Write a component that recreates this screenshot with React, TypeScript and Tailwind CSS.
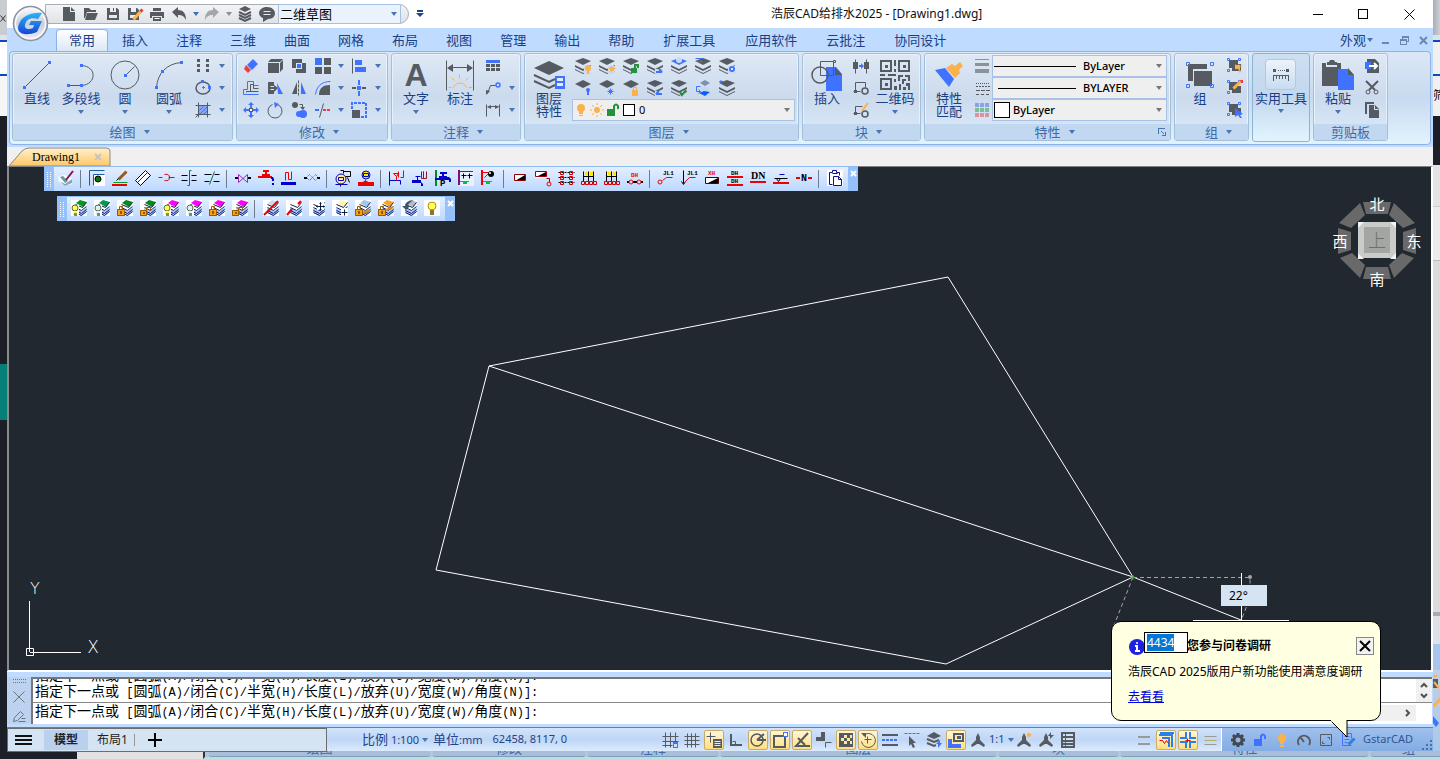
import { useEffect, useRef, type ReactNode } from "react";

const G = "#565b62";
const B = "#3f72ff";
const O = "#fbb24c";

type SvgProps = { w?: number; h?: number; box?: string; crisp?: boolean; children: ReactNode };

function Svg({ w = 16, h = 16, box, crisp, children }: SvgProps) {
  return (
    <svg
      width={w}
      height={h}
      viewBox={box ?? `0 0 ${w} ${h}`}
      fill="none"
      className="shrink-0 overflow-visible"
      shapeRendering={crisp ? "crispEdges" : undefined}
      aria-hidden="true"
    >
      {children}
    </svg>
  );
}

// stroke path, odd widths are moved onto the pixel grid
function S({ d, c = G, w = 1, dash }: { d: string; c?: string; w?: number; dash?: string }) {
  return <path d={d} stroke={c} strokeWidth={w} strokeDasharray={dash} transform={w % 2 ? "translate(.5 .5)" : undefined} />;
}

// filled path
function F({ d, c = G }: { d: string; c?: string }) {
  return <path d={d} fill={c} />;
}

function Caret({ c = "#4a74b4" }: { c?: string }) {
  return (
    <Svg w={6} h={4}>
      <F d="M0 0h6L3 4z" c={c} />
    </Svg>
  );
}

/* ---------- quick access ---------- */

const quickIcons: { name: string; icon: ReactNode; caret?: string }[] = [
  { name: "新建", icon: <Svg><F d="M2 1h7v5h5v9H2z" /><F d="M10 1l4 4h-4z" /></Svg> },
  { name: "打开", icon: <Svg><F d="M1 2h5l2 2h5v2H4L2 12H1z" /><F d="M4 7h11l-3 7H2z" /></Svg> },
  { name: "保存", icon: <Svg><path fillRule="evenodd" fill={G} d="M2 2h10l2 2v10H2zM4 9v3h8V9zM5 2v4h6V2h-2v3H8V2z" /></Svg> },
  { name: "另存为", icon: <Svg><path fillRule="evenodd" fill={G} d="M1 2h9l2 2v10H1zM3 9v3h7V9zM4 2v4h5V2z" /><S d="M6 13l8-9" c={O} w={3} /><S d="M13 5l2-2" c="#e23b3b" w={3} /></Svg> },
  { name: "打印", icon: <Svg><F d="M4 2h8v3H4zM1 6h14v6h-2v-2H3v2H1zM4 11h8v4H4z" /><S d="M5 12h5" c="#fff" /></Svg> },
  { name: "放弃", icon: <Svg><F d="M1 6l6-5v3c5 0 8 3 8 10-2-4-4-5-8-5v3z" /></Svg>, caret: "#3c6db8" },
  { name: "重做", icon: <Svg><F d="M15 6L9 1v3c-5 0-8 3-8 10 2-4 4-5 8-5v3z" c="#a3a7ac" /></Svg>, caret: "#8a8f96" },
  { name: "图层", icon: <Svg><F d="M8 0l6 3-6 3-6-3z" /><S d="M2 6l6 3 6-3M2 9l6 3 6-3M2 12l6 3 6-3" w={2} /></Svg> },
  { name: "消息", icon: <Svg><F d="M8 1c10 0 11 12 1 12l-5 3 0-4C-3 9 0 1 8 1z" /><S d="M4 5h7M4 8h7" c="#e8eaee" /></Svg> },
];

function QuickAccess() {
  return (
    <div className="ml-[38px] mt-1 flex h-5 items-center rounded-r-full border border-[#a9afb8] bg-gradient-to-b from-[#f3f4f6] to-[#dfe2e7] pl-3 pr-[7px]">
      {quickIcons.map((q) => (
        <div key={q.name} className="flex items-center">
          <button type="button" aria-label={q.name} className="flex w-[22px] justify-center">
            {q.icon}
          </button>
          {q.caret && (
            <span className="flex w-[11px] justify-center">
              <Caret c={q.caret} />
            </span>
          )}
        </div>
      ))}
      <div className="relative flex items-center">
        <select
          aria-label="工作空间"
          className="h-5 w-[123px] appearance-none border border-[#a8c2e6] bg-[#eaf2fc] pl-px text-[13px] leading-4 text-black"
        >
          <option>二维草图</option>
        </select>
        <span className="pointer-events-none absolute right-1">
          <Caret />
        </span>
      </div>
    </div>
  );
}

function TitleBar() {
  return (
    <header className="relative flex h-7 shrink-0 bg-white">
      <button type="button" aria-label="浩辰CAD" className="absolute left-[5px] top-[5px] z-10">
        <Svg w={37} h={37}>
          <defs>
            <linearGradient id="orb" x1="0" y1="0" x2="0" y2="1">
              <stop offset="0" stopColor="#fdfdfe" />
              <stop offset="0.5" stopColor="#c9ced9" />
              <stop offset="1" stopColor="#eceff5" />
            </linearGradient>
            <linearGradient id="gee" x1="0" y1="0" x2="0" y2="1">
              <stop offset="0" stopColor="#2bb5f5" />
              <stop offset="1" stopColor="#1546d8" />
            </linearGradient>
          </defs>
          <circle cx="18.500" cy="18.500" r="17" fill="url(#orb)" stroke="#8a919f" strokeWidth="1.500" />
          <circle cx="18.500" cy="18.500" r="15" stroke="#f5f7fb" strokeWidth="1.500" />
          <path d="M30 8l-4 6c-7-2-12 0-13 6-1 4 4 5 8 3l1-3h-5l2-4h11l-5 11C12 32 3 28 7 19 10 11 19 7 30 8z" fill="url(#gee)" />
        </Svg>
      </button>
      <QuickAccess />
      <button type="button" aria-label="自定义" className="ml-[7px] flex h-7 items-center">
        <Svg w={8} h={8}>
          <F d="M1 0h6v2H1zM0 3h8L4 7z" c="#1e4489" />
        </Svg>
      </button>
      <h1 className="absolute left-[764px] top-0 text-[12px] leading-7 text-[#111]">浩辰CAD给排水2025 - [Drawing1.dwg]</h1>
      <div className="ml-auto flex">
        <button type="button" aria-label="最小化" className="flex w-[45px] items-center justify-center">
          <Svg w={11} h={11} crisp><S d="M0 5h10" c="#000" /></Svg>
        </button>
        <button type="button" aria-label="最大化" className="flex w-[46px] items-center justify-center">
          <Svg w={11} h={11} crisp><S d="M0 0h9v9H0z" c="#000" /></Svg>
        </button>
        <button type="button" aria-label="关闭" className="flex w-[47px] items-center justify-center">
          <Svg w={11} h={11}><S d="M0 0l10 10M10 0L0 10" c="#000" /></Svg>
        </button>
      </div>
    </header>
  );
}

const tabs = ["常用", "插入", "注释", "三维", "曲面", "网格", "布局", "视图", "管理", "输出", "帮助", "扩展工具", "应用软件", "云批注", "协同设计"];

function tabClass(label: string, active: boolean) {
  if (active) {
    return "h-[22px] whitespace-nowrap rounded-t border border-b-0 border-[#8db2e3] bg-gradient-to-b from-white to-[#dbe8f7] px-3 leading-[21px]";
  }
  if (label.length > 3) {
    return "h-[22px] whitespace-nowrap px-[15px] leading-[22px]";
  }
  return "h-[22px] whitespace-nowrap px-[14px] leading-[22px]";
}

function TabRow() {
  return (
    <nav className="flex h-[23px] shrink-0 items-end bg-[#bfdbff] pl-[49px] text-[13px] text-[#1a3f85]">
      {tabs.map((t, i) => (
        <button key={t} type="button" className={tabClass(t, i === 0)}>
          {t}
        </button>
      ))}
      <div className="ml-auto flex h-[22px] items-center pr-px">
        <button type="button" className="mr-2 flex items-center gap-px leading-5">
          外观
          <Caret />
        </button>
        <button type="button" aria-label="最小化文档" className="w-[19px]">
          <Svg w={9} h={9}><S d="M1 7h7" c="#6d86ad" w={2} /></Svg>
        </button>
        <button type="button" aria-label="还原文档" className="w-[19px]">
          <Svg w={9} h={9} crisp><S d="M2 2V0h6v5H6M2 1h6M0 3h6v5H0zM0 4h6" c="#6d86ad" /></Svg>
        </button>
        <button type="button" aria-label="关闭文档" className="w-[13px]">
          <Svg w={9} h={9}><S d="M1 1l7 7M8 1L1 8" c="#6d86ad" w={2} /></Svg>
        </button>
      </div>
    </nav>
  );
}

/* ---------- ribbon ---------- */

function Panel({ title, width, caret = true, launcher, children }: { title: string; width: string; caret?: boolean; launcher?: boolean; children: ReactNode }) {
  return (
    <section className={`${width} flex h-[88px] shrink-0 flex-col overflow-hidden rounded-[3px] border border-[#a3bfdc] bg-gradient-to-b from-[#dfe9f5] via-[#cbdaed] to-[#dcecf9] shadow-[inset_0_0_0_1px_#e8f1fa]`}>
      <div className="flex flex-1 pl-[2px] pt-px">{children}</div>
      <div className="relative flex h-4 shrink-0 items-center justify-center gap-2 bg-[#c1d8f0] text-[13px] leading-4 text-[#3f69a8]">
        {caret && <span className="w-[6px]" />}
        {title}
        {caret && <Caret />}
        {launcher && (
          <button type="button" aria-label="特性选项板" className="absolute right-1">
            <Svg w={8} h={8} crisp><S d="M0 5V0h6M3 3l3 3M7 3v4H3" c="#4a74b4" /></Svg>
          </button>
        )}
      </div>
    </section>
  );
}

function Big({ label, icon, caret, width = "w-11" }: { label: string; icon: ReactNode; caret?: boolean; width?: string }) {
  return (
    <button type="button" className={`${width} flex shrink-0 flex-col items-center text-[13px] text-[#1a3f85]`}>
      <span className="flex h-9 items-center justify-center pt-1">{icon}</span>
      <span className="whitespace-pre leading-[13px] pt-px">{label}</span>
      {caret && (
        <span className="pt-[5px]">
          <Caret />
        </span>
      )}
    </button>
  );
}

function Cell({ icon, name, width = "w-6" }: { icon?: ReactNode; name: string; width?: string }) {
  return (
    <button type="button" aria-label={name} className={`${width} flex h-[22px] shrink-0 items-center justify-center`}>
      {icon ?? <Caret />}
    </button>
  );
}

function Layers({ top = G, children }: { top?: string; children?: ReactNode }) {
  return (
    <Svg>
      <F d="M0 7l8 4 8-4v2l-8 4-8-4zM0 11l8 4 8-4v1l-8 4-8-4z" />
      <F d="M8 0l8 3-8 4-8-4z" c={top} />
      {children}
    </Svg>
  );
}

// pale patch under an accent in the lower right corner
const patch = <F d="M9 8h7v8H9z" c="#cfdcef" />;

const drawSmall: ReactNode[] = [
  <Svg crisp><F d="M2 1h3v3H2zM11 1h3v3h-3zM2 6h3v3H2zM11 6h3v3h-3zM2 11h3v3H2zM11 11h3v3h-3z" /></Svg>,
  <Svg><ellipse cx="8" cy="8" rx="7" ry="6" stroke={G} strokeWidth="1.500" /><F d="M6 0h3v3H6zM13 6h3v3h-3zM7 7h3v1H7zM8 6h1v3H8z" c={B} /></Svg>,
  <Svg><F d="M4 4h9v9H4z" c="#86a6f5" /><S d="M4 8l4-4M4 12l8-8M8 12l4-4" c={B} /><S d="M3 0v15M12 0v15M0 3h15M0 12h15M0 15l4-4" w={1} /></Svg>,
];

const modifyRows: ReactNode[][] = [
  [
    <Svg><F d="M10 1l5 5-6 6-5-5z" c={B} /><F d="M3 7l5 5-3 3-4-4z" c="#e8413f" /></Svg>,
    <Svg><F d="M4 1h12l-3 3H1zM1 5h11v10H1zM13 5l3-3v9l-3 3z" /></Svg>,
    <Svg><F d="M1 1h10v4H5v5H1z" /><F d="M5 5h10v10H5z" /><F d="M5 5h6v6H5z" c="#dbe6f5" /><F d="M6 6h4v4H6z" c={B} /></Svg>,
    <Svg><F d="M0 0h7v7H0z" c={B} /><F d="M9 0h7v7H9zM0 9h7v7H0zM9 9h7v7H9z" /></Svg>,
    null,
    <Svg><S d="M1 0v15" /><F d="M4 2h7v5H4zM4 9h11v5H4z" c={B} /></Svg>,
    null,
  ],
  [
    <Svg><S d="M15 14H0V9h4V1h6v4h5" c={B} /><S d="M15 11H3V12M3 11h4V4h3v4h5" /></Svg>,
    <Svg><F d="M1 2h6v12H1z" /><S d="M3 6h5M3 9h5" c="#dbe6f5" /><F d="M7 5l4 3-4 4z" /><F d="M10 3l6 11h-5z" c={B} /></Svg>,
    <Svg><F d="M6 2v12H1z" /><F d="M10 2v12h5z" c={B} /><S d="M7 0v16" dash="3 1" /></Svg>,
    <Svg><S d="M0 14C1 6 6 1 15 1" c={B} /><F d="M4 15C4 8 8 5 15 5v10z" /></Svg>,
    null,
    <Svg><S d="M1 8h4M11 8h4" w={2} /><S d="M8 0v5M8 11v5" c={B} w={2} /><F d="M6 6h4v4H6z" c={B} /></Svg>,
    null,
  ],
  [
    <Svg><S d="M8 2v12M2 8h12" c={B} w={2} /><F d="M8 0l3 3H5zM8 16l-3-3h6zM0 8l3-3v6zM16 8l-3 3V5z" c={B} /><F d="M6 6h4v4H6z" c={G} /><F d="M7 7h2v2H7z" c="#fff" /></Svg>,
    <Svg><S d="M5 2a7 7 0 1 0 5 0" /><F d="M7 0l5 2-4 4z" c={B} /></Svg>,
    <Svg><circle cx="4" cy="3" r="3" fill={G} /><S d="M8 2h3v4" /><F d="M9 5h5l-2 3z" /><circle cx="8" cy="12" r="3" fill={B} /><circle cx="12" cy="12" r="4" fill={B} /></Svg>,
    <Svg><S d="M0 8h4" c={B} w={2} /><S d="M4 15L8 1" /><S d="M8 8h8" c="#e8413f" w={2} dash="3 1" /></Svg>,
    null,
    <Svg><S d="M1 7V1h14v14H9" c={B} w={2} dash="3 1" /><F d="M1 8h8v8H1z" /></Svg>,
    null,
  ],
];

const layerRows: ReactNode[][] = [
  [
    <Layers>{patch}<circle cx="13" cy="10" r="3" fill={O} /><F d="M12 12h2v4h-2z" c={O} /></Layers>,
    <Layers>{patch}<circle cx="13" cy="11" r="2" fill={O} /><S d="M12 7v7M9 10h7M10 8l5 5M15 8l-5 5" c={O} /></Layers>,
    <Layers>{patch}<F d="M8 10h6v5H8z" c="#26913b" /><S d="M12 10V7h3v3" c="#26913b" w={2} /></Layers>,
    <Layers><F d="M8 11h8v5H8z" c="#cfdcef" /><S d="M9 14h6M12 11l3 3" c={B} w={2} /></Layers>,
    <Layers top={B}><circle cx="8" cy="2" r="3" fill="#c9dcf5" /></Layers>,
    <Layers><S d="M0 0h7M2 3h5" c={B} /></Layers>,
    <Layers>{patch}<circle cx="13" cy="11" r="3" fill={B} /><F d="M12 10h2v2h-2z" c="#dbe6f5" /></Layers>,
  ],
  [
    <Svg><F d="M8 0l8 4-8 4-8-4z" /><circle cx="13" cy="10" r="2" fill={B} /><F d="M12 11h2v4h-2z" c={B} /></Svg>,
    <Svg><F d="M8 0l8 4-8 4-8-4z" /><S d="M11 8v6M8 11h6M9 9l4 4M13 9l-4 4" c={B} /></Svg>,
    <Svg><F d="M8 0l8 4-8 4-8-4z" /><F d="M9 10h6v6H9z" c={O} /><S d="M10 10V7h3v3" c={O} /></Svg>,
    <Layers><F d="M8 11h8v5H8z" c="#cfdcef" /><S d="M15 14H9M12 11l-3 3" c={B} w={2} /></Layers>,
    <Layers><S d="M9 12l2 3 4-5" c="#26913b" w={2} /></Layers>,
    <Svg><F d="M10 0l5 3-5 3-5-3z" c="#7f8fae" /><F d="M10 6l5 3-5 3-5-3z" c="#c3d5f0" /><F d="M9 11l6 1-5 4-6-3z" c="#0b5cff" /><S d="M5 6H1v5h4M3 9l2 2-2 2" c={B} /></Svg>,
    <Layers><S d="M0 1h5M2 0L0 1l2 2" c={B} /></Layers>,
  ],
];

function Bulb({ c = O }: { c?: string }) {
  return (
    <Svg w={14} h={14}>
      <circle cx="7" cy="5" r="4" fill={c} />
      <F d="M5 8h4v3H5zM5 12h4v1H5z" c={c} />
    </Svg>
  );
}

function Sun() {
  return (
    <Svg w={14} h={14}>
      <circle cx="7" cy="7" r="3" fill={O} />
      <path d="M7 0v2M7 12v2M0 7h2M12 7h2M2 2l2 2M10 10l2 2M12 2l-2 2M4 10l-2 2" stroke={O} />
    </Svg>
  );
}

function LayerCombo() {
  return (
    <div className="relative ml-px flex h-[22px] w-[223px] items-center border border-[#a8c2e6] bg-[#efefef]">
      <span className="pointer-events-none absolute left-px flex items-center gap-[2px]">
        <Bulb />
        <Sun />
        <Svg w={14} h={14}><F d="M1 6h8v7H1z" c="#26913b" /><S d="M8 6V3q2-3 4 0v3" c="#26913b" w={2} /></Svg>
        <span className="ml-px h-3 w-3 border border-black bg-white" />
      </span>
      <select aria-label="当前图层" className="h-full w-full appearance-none bg-transparent pl-[66px] text-[11px] leading-4 text-black">
        <option>0</option>
      </select>
      <span className="pointer-events-none absolute right-1"><Caret c="#777" /></span>
    </div>
  );
}

function PropCombo({ label, text, left, line }: { label: string; text: string; left: string; line: ReactNode }) {
  return (
    <div className="relative flex h-[22px] w-[175px] items-center border border-[#a8c2e6] bg-[#efefef]">
      <span className="pointer-events-none absolute left-px flex items-center">{line}</span>
      <select aria-label={label} className={`${left} h-full w-full appearance-none bg-transparent text-[11px] font-medium leading-4 text-black`}>
        <option>{text}</option>
      </select>
      <span className="pointer-events-none absolute right-1"><Caret c="#777" /></span>
    </div>
  );
}

const groupBox = (
  <>
    <F d="M2 2h9v4H6v4H2z" />
    <F d="M5 6h9v7H5z" />
    <S d="M0 0h2v2H0zM11 0h2v2h-2zM0 11h2v2H0z" c={B} />
  </>
);

function Ribbon() {
  return (
    <div className="shrink-0 bg-[#bfdbff] px-[2px] pb-[2px]">
      <div className="flex h-[94px] gap-[3px] overflow-hidden rounded-[4px] border border-[#8db2e3] bg-gradient-to-b from-[#dbe7f5] via-[#c8daf0] to-[#e1f4fe] pl-[2px] pt-px">
        <Panel title="绘图" width="w-[221px]">
          <Big label="直线" icon={<Svg w={28} h={28}><S d="M1 26L26 1" /><F d="M0 25h3v3H0zM25 0h3v3h-3z" c={B} /></Svg>} />
          <Big label="多段线" caret icon={<Svg w={28} h={28}><S d="M2 24h12c15-1 16-19 0-20" /><F d="M0 23h3v3H0zM13 23h3v3h-3zM13 3h3v3h-3z" c={B} /></Svg>} />
          <Big label="圆" caret icon={<Svg w={30} h={30}><circle cx="15" cy="15" r="14" stroke={G} /><S d="M15 15l9-9" /><F d="M14 14h3v3h-3z" c={B} /></Svg>} />
          <Big label="圆弧" caret icon={<Svg w={28} h={28}><S d="M1 26C2 12 11 2 26 1" /><F d="M0 25h3v3H0zM6 9h3v3H6zM25 0h3v3h-3z" c={B} /></Svg>} />
          <div className="grid grid-cols-[24px_14px] content-start">
            {drawSmall.map((icon, i) => [
              <Cell key={`i${i}`} icon={icon} name={`绘图工具 ${i + 1}`} />,
              <Cell key={`c${i}`} name={`绘图菜单 ${i + 1}`} width="w-[14px]" />,
            ])}
          </div>
        </Panel>

        <Panel title="修改" width="w-[152px]">
          <div className="grid grid-cols-[24px_24px_24px_23px_14px_22px_16px] content-start">
            {modifyRows.flatMap((row, r) =>
              row.map((icon, i) => <Cell key={`${r}-${i}`} icon={icon} name={`修改 ${r + 1}-${i + 1}`} width="w-full" />)
            )}
          </div>
        </Panel>

        <Panel title="注释" width="w-[130px]">
          <Big label="文字" caret icon={<span className="text-[32px] font-bold leading-8 text-[#565b62] font-['Liberation_Sans',sans-serif]">A</span>} />
          <Big
            label="标注"
            icon={
              <Svg w={30} h={30}>
                <S d="M1 0v30M28 0v30M4 7h22" w={1} />
                <F d="M2 8l6-4v8zM28 8l-6-4v8z" />
                <S d="M8 27a7 7 0 0 1 13 0M3 27h3M23 27h4M14 14v4M6 17l3 3M23 17l-3 3" c={O} />
              </Svg>
            }
          />
          <div className="grid grid-cols-[22px_16px] content-start">
            <Cell name="表格" width="w-[22px]" icon={<Svg crisp><F d="M1 2h14v3H1z" c={B} /><F d="M1 6h4v3H1zM6 6h4v3H6zM11 6h4v3h-4zM1 10h4v3H1zM6 10h4v3H6zM11 10h4v3h-4z" /></Svg>} />
            <span />
            <Cell name="引线" width="w-[22px]" icon={<Svg><S d="M2 13L5 5h5" w={1} /><F d="M1 15l0-5 4 1z" /><circle cx="13" cy="5" r="2" stroke={B} strokeWidth="1.500" /></Svg>} />
            <Cell name="引线菜单" width="w-4" />
            <Cell name="尺寸" width="w-[22px]" icon={<Svg><S d="M1 2v12M14 2v12M3 4h10" /><F d="M2 5l4-2v4zM14 5l-4-2v4z" /></Svg>} />
            <Cell name="尺寸菜单" width="w-4" />
          </div>
        </Panel>

        <Panel title="图层" width="w-[275px]">
          <Big
            label={"图层\n特性"}
            width="w-[44px]"
            icon={
              <Svg w={32} h={30}>
                <F d="M16 1l15 7-15 7L1 8z" />
                <S d="M1 15l15 7 6-3M1 21l15 7 6-3" w={2} />
                <F d="M22 16h10v13H22z" c={B} />
                <F d="M24 18h6v3h-6zM24 23h6v3h-6z" c="#e4edfa" />
              </Svg>
            }
          />
          <div className="flex flex-col">
            {layerRows.map((row, r) => (
              <div key={r} className="flex">
                {row.map((icon, i) => (
                  <Cell key={i} icon={icon} name={`图层 ${r + 1}-${i + 1}`} />
                ))}
              </div>
            ))}
            <LayerCombo />
          </div>
        </Panel>

        <Panel title="块" width="w-[119px]">
          <Big
            label="插入"
            width="w-[44px]"
            icon={
              <Svg w={32} h={32}>
                <F d="M15 8h10l6 7v17H15z" c={B} />
                <F d="M24 8l7 8h-7z" />
                <S d="M9 2h13v14H9z" />
                <circle cx="9" cy="16" r="8" stroke={G} strokeWidth="1.500" />
                <S d="M22 1h2v2h-2z" />
              </Svg>
            }
          />
          <div className="flex flex-col">
            <Cell name="块编辑" icon={<Svg><S d="M2 1v14M13 1v14" /><F d="M0 4h5v7H0zM11 4h5v7h-5z" /><F d="M6 7h2V5l3 3-3 3V9H6z" c={B} /></Svg>} />
            <Cell name="创建块" icon={<Svg><S d="M2 11V2h10v5M0 11h7" /><F d="M1 10h3v3H1z" /><circle cx="12" cy="11" r="3" stroke={G} strokeWidth="1.500" /></Svg>} />
            <Cell name="编辑属性" icon={<Svg><S d="M2 11V4h7M0 11h7" /><F d="M1 10h3v3H1z" /><circle cx="12" cy="12" r="3" stroke={G} strokeWidth="1.500" /><S d="M9 9l6-8" c={O} w={2} /></Svg>} />
          </div>
          <Big
            label="二维码"
            caret
            width="w-[44px]"
            icon={
              <Svg w={30} h={30} crisp>
                <path fillRule="evenodd" fill={G} d="M0 0h12v12H0zM2 2v8h8V2zM18 0h12v12H18zM20 2v8h8V2zM0 18h12v12H0zM2 20v8h8v-8zM5 5h3v3H5zM23 5h3v3h-3zM5 23h3v3H5z" />
                <F d="M14 0h2v6h-2zM14 9h2v3h-2zM0 14h5v2H0zM8 14h8v2H8zM18 15h5v2h-3v4h-2zM25 15h5v2h-5zM28 17h2v4h-2zM22 19h4v2h-2v3h-2zM26 23h4v7h-2v-4h-2zM19 24h2v6h-2zM14 19h2v3h-2zM14 26h3v4h-3zM23 27h3v3h-3z" />
              </Svg>
            }
          />
        </Panel>

        <Panel title="特性" width="w-[247px]" launcher>
          <Big
            label={"特性\n匹配"}
            width="w-[44px]"
            icon={
              <Svg w={30} h={26}>
                <F d="M1 8l10-2 9 11-5 8z" c={B} />
                <F d="M12 6l6-4 3 2 5-4 3 4-4 4 1 3-5 5z" c={O} />
              </Svg>
            }
          />
          <div className="flex w-[21px] flex-col items-center">
            <Cell name="线宽" icon={<Svg w={14} h={16} crisp><F d="M0 1h14v1H0zM0 5h14v3H0zM0 11h14v4H0z" c="#8b929c" /></Svg>} />
            <Cell name="线型" icon={<Svg w={14} h={16} crisp><S d="M0 3h14" dash="1 1" /><S d="M0 6h14" dash="2 1" /><S d="M0 10h14" dash="4 1" /><S d="M0 14h14" dash="3 2" /></Svg>} />
            <Cell name="颜色" icon={<Svg w={14} h={14} crisp><F d="M0 0h4v4H0zM5 0h4v4H5zM10 0h4v4h-4z" c="#8aa3e6" /><F d="M0 5h4v4H0zM5 5h4v4H5zM10 5h4v4h-4z" c="#79bf94" /><F d="M0 10h4v4H0zM5 10h4v4H5zM10 10h4v4h-4z" c="#e08f9c" /></Svg>} />
          </div>
          <div className="flex flex-col">
            <PropCombo label="线型" text="ByLayer" left="pl-[90px]" line={<Svg w={82} h={1} crisp><F d="M0 0h82v1H0z" c="#000" /></Svg>} />
            <PropCombo label="线宽" text="BYLAYER" left="pl-[90px]" line={<Svg w={82} h={1} crisp><F d="M4 0h78v1H4z" c="#000" /></Svg>} />
            <PropCombo label="颜色" text="ByLayer" left="pl-[20px]" line={<span className="h-4 w-4 border border-black bg-white" />} />
          </div>
        </Panel>

        <Panel title="组" width="w-[75px]">
          <Big
            label="组"
            width="w-[46px]"
            icon={
              <Svg w={28} h={28}>
                <F d="M2 3h19v5H7v12H2z" />
                <F d="M8 10h18v15H8z" />
                <S d="M0 1h3v3H0zM24 1h3v3h-3zM0 23h3v3H0zM24 23h3v3h-3z" c={B} />
              </Svg>
            }
          />
          <div className="flex flex-col">
            <Cell name="解组" icon={<Svg>{groupBox}<S d="M8 6l6 8M8 9l7-2M11 6l1 8" c={O} /><F d="M8 7h5v4H8z" c={O} /></Svg>} />
            <Cell name="编辑组" icon={<Svg>{groupBox}<S d="M6 8l8-8" c={O} w={3} /><F d="M13 0h3v3h-2z" c="#e8413f" /></Svg>} />
            <Cell name="选择组" icon={<Svg>{groupBox}<F d="M8 6l8 6-3 1 2 3-2 0-2-3-3 2z" c={B} /></Svg>} />
          </div>
        </Panel>

        <section className="flex h-[89px] w-[58px] shrink-0 flex-col items-center rounded-[3px] border border-[#8db5d3] bg-gradient-to-b from-[#cddff2] via-[#c2d7ee] to-[#e2f5fe]">
          <button type="button" className="flex flex-col items-center text-[13px] text-[#1a3f85]">
            <span className="mt-[5px] flex h-[31px] w-[31px] items-center justify-center rounded border border-[#b4c8df] bg-gradient-to-b from-[#edf3fa] to-[#c8dcf1]">
              <Svg w={18} h={14} crisp><F d="M1 1h3v3H1zM14 1h3v3h-3z" /><S d="M5 2h9" dash="1 1" /><S d="M1 12V7h15v5M4 7v3M7 7v3M10 7v3M13 7v3" /></Svg>
            </span>
            <span className="whitespace-nowrap pt-px leading-[14px]">实用工具</span>
            <span className="pt-1"><Caret /></span>
          </button>
        </section>

        <Panel title="剪贴板" width="w-[75px]" caret={false}>
          <Big
            label="粘贴"
            caret
            width="w-[44px]"
            icon={
              <Svg w={32} h={32}>
                <F d="M0 4h4v4h11V4h4v23H0z" />
                <F d="M5 3h2l1-2h4l1 2h2v3H5z" />
                <F d="M16 10h10l6 6v15H16z" c={B} />
                <F d="M26 9l6 7h-6z" />
              </Svg>
            }
          />
          <div className="flex flex-col">
            <Cell name="复制链接" icon={<Svg><F d="M3 1h8l4 4v10H3z" /><F d="M1 4h6v7H1z" c={B} /><S d="M5 8h8M10 5l3 3-3 3" c="#fff" w={2} /></Svg>} />
            <Cell name="剪切" icon={<Svg><S d="M2 1l9 9M14 1l-9 9" w={2} /><circle cx="4" cy="12" r="2" stroke={G} /><circle cx="12" cy="12" r="2" stroke={G} /></Svg>} />
            <Cell name="复制" icon={<Svg><F d="M1 0h9v2H3v10H1z" /><F d="M5 3h6l4 4v9H5z" /><S d="M10 3v4h4" c="#dbe6f5" /></Svg>} />
          </div>
        </Panel>
      </div>
    </div>
  );
}

/* ---------- floating toolbars ---------- */

const R = "#f00000";
const NAVY = "#0000c8";
const K = "#000";

function Tx({ x, y, c = K, size = 6, children }: { x: number; y: number; c?: string; size?: number; children: string }) {
  return (
    <text x={x} y={y} fill={c} fontSize={size} fontWeight="bold" fontFamily="Liberation Mono, monospace">
      {children}
    </text>
  );
}

const tap = (
  <>
    <F d="M5 2h7v2H9v2H7V4H5zM4 6h8v4H4z" c={NAVY} />
    <F d="M0 8h4v2H0zM12 7h2l2 2v3h-2v-2h-2z" c={NAVY} />
  </>
);

const radiator = (
  <>
    <S d="M2 1v10M7 1v10M12 1v10M2 6h10" c={K} />
    <F d="M4 2h3v3H4zM9 2h3v3H9z" c="#ffe600" />
    <S d="M0 11h3v3H0zM4 11h3v3H4zM8 11h3v3H8zM12 11h3v3h-3z" c="#d00000" />
  </>
);

const pipeIcons: ReactNode[][] = [
  [<><F d="M0 7l6-2 8 3v6l-7 2-6-4z" c="#fff" /><F d="M1 11l6 3 7-5v4l-7 3z" c="#8aa5b5" /><F d="M2 7l3-1 5 5-3 2z" c="#5d9dab" /><S d="M15 1L8 10" c="#8c1056" w={2} /></>],
  [
    <><F d="M4 4h12v12H4z" c="#fff" /><S d="M0 15V0h15M4 15V4h11" c="#1c5ba6" /><circle cx="9" cy="9" r="3" fill="#007a00" stroke={K} /></>,
    <><S d="M6 9l8-8" c="#9a5a14" w={3} /><S d="M4 10l2-2" c={K} /><S d="M1 12h14" c="#00a030" /><S d="M0 15h15" c={R} w={2} /></>,
    <><F d="M1 11l9-10 5 3-9 11z" c="#fff" /><S d="M0 10L10 0M5 15L15 5M10 0l5 5M0 10l5 5" c={K} /><S d="M2 12L12 2" c="#1919b4" /></>,
    <><S d="M0 7h4M10 7h6M6 4q5-1 5 3t-5 3" c={R} w={1} /></>,
    <><S d="M0 5h6M10 5h5M0 10h6M10 10h5" c={K} /><S d="M6 15h2V0h2" c="#007a3c" w={1} /></>,
    <><S d="M0 4h7M10 4h5M0 11h5M9 11h6" c={K} /><S d="M10 1L5 14" c="#007a3c" /></>,
  ],
  [
    <><F d="M0 7h3v2H0zM13 7h3v2h-3z" c={K} /><S d="M3 4l9 8V4L3 12z" c="#9a2bb4" /></>,
    <><F d="M5 0h6v2H9v2h3v4H4V4h3V2H5z" c={R} /><F d="M0 6h4v2H0zM12 6h2v2h-2z" c={R} /><F d="M13 7h2l1 2v2h-2V9h-1zM14 13h2v2h-2z" c={NAVY} /></>,
    <><S d="M4 10V2h3v7h3V1" c={R} /><F d="M0 12h15v3H0z" c={NAVY} /></>,
    <><F d="M0 7h3v2H0zM13 7h3v2h-3z" c={K} /><S d="M2 7l3-3 3 3 3-3 3 3-3 3-3-3-3 3z" c="#007a3c" dash="1 1" /></>,
  ],
  [
    <><circle cx="6" cy="9" r="5" fill="#ffe98c" stroke={NAVY} /><S d="M3 7h5v3H3zM0 14h12M5 14v2" c={NAVY} /><S d="M8 1h7v5h-5M12 7l2 5M5 0h3v3" c={K} /></>,
    <><circle cx="8" cy="5" r="4" fill="#ffe600" stroke={NAVY} /><S d="M5 3h5v3H5z" c={NAVY} /><S d="M7 9v3M5 11h4" c={R} /><F d="M0 12h16v4H0z" c={R} /></>,
  ],
  [
    <><S d="M0 15V1M0 10h11M11 10v4" c={NAVY} /><S d="M4 3h5L7 6zM7 6v4M9 7V1M11 7h3V0" c={R} /></>,
    <><S d="M3 6h5M5 6v4" c={NAVY} /><F d="M0 10h9v2l2 2v2H9v-3H0z" c={NAVY} /><S d="M9 1v7h2V1v7h3V1" c="#8c1919" /></>,
    <><F d="M0 0h2v16H0z" c="#008a20" />{tap}<Tx x={5} y={16} size={9}>P</Tx></>,
    <><F d="M1 1h15v15H1z" c="#e8f2ff" /><F d="M0 0h2v15H0zM2 1h13v1H2z" c="#7b0f7b" /><S d="M5 3v5M11 3v5M3 5h5M9 5h5" c={K} /><F d="M2 11h9v1H9v2H5v-2H2z" c="#00c828" /></>,
    <><F d="M0 0h2v15H0z" c={R} /><S d="M1 2h6M3 7l4-4" c={R} /><circle cx="10" cy="4" r="3" fill={K} /><circle cx="9" cy="3" r="1" fill="#fff" /><F d="M2 11h9v1H9v2H5v-2H2z" c="#00c828" /></>,
  ],
  [
    <><F d="M2 5h12v6H2z" c="#fff" /><F d="M3 11l10-6v6z" c={K} /><S d="M2 4h11v6H2z" c="#900000" /></>,
    <><F d="M1 2h11v6H1z" c="#fff" /><F d="M1 7l10-5v5z" c={K} /><S d="M0 1h11v5H0zM11 8h3v4" c="#a00000" /><circle cx="14" cy="14" r="2" stroke={R} /></>,
    <><S d="M0 2h16M0 7h16M0 12h16" c={K} dash="2 1" /><S d="M2 1h3v3H2zM11 1h3v3h-3zM2 6h3v3H2zM11 6h3v3h-3zM2 11h3v3H2zM11 11h3v3h-3z" c="#d00000" /></>,
    radiator,
    radiator,
    <><Tx x={4} y={7} c={R}>DH</Tx><F d="M0 11h2v2H0zM6 11h4v2H6zM14 11h2v2h-2z" c={K} /><circle cx="4" cy="12" r="2" stroke={R} /><circle cx="12" cy="12" r="2" stroke={R} /></>,
  ],
  [
    <><Tx x={5} y={5}>JL1</Tx><S d="M4 10l4-3h6" c={R} /><circle cx="2" cy="12" r="2" stroke={R} /></>,
    <><Tx x={6} y={5}>JL1</Tx><S d="M2 0v13M0 11l2 3 2-3" c={K} /><S d="M4 11l4-4h6" c={R} /></>,
    <><Tx x={4} y={5} c={R}>XH</Tx><F d="M1 8h13v6H1z" c="#fff" /><F d="M2 14l12-6v6z" c={K} /><S d="M1 7h13v6H1z" c="#500000" /></>,
    <><Tx x={4} y={5}>DH</Tx><F d="M0 6h16v2H0zM0 14h16v2H0z" c={R} /><Tx x={4} y={13}>DH</Tx></>,
    <>
      <text x="1" y="9" fontSize="10" fill={K} fontFamily="Liberation Serif, serif" fontWeight="bold">DN</text>
      <F d="M0 11h16v2H0z" c={R} />
    </>,
    <><S d="M6 4h5" c={NAVY} /><S d="M1 8h13M3 8l2 3 2-3" c={K} /><F d="M0 12h16v2H0z" c={R} /></>,
    <><F d="M0 7h4v2H0zM12 7h4v2h-4z" c={R} /><Tx x={5} y={11} size={10}>N</Tx></>,
  ],
  [<><F d="M0 0h16v16H0z" c="#fff" /><S d="M5 14H2V2h3V0h4v2h3v3M6 6h5l3 3v6H6z" c="#10108c" /><S d="M11 6v3h3M5 3h5" c="#10108c" /></>],
];

const pixelLayers = (top: string) => (
  <>
    <F d="M0 0h16v16H0z" c="#fff" />
    <F d="M4 8l7 3 5-4v5l-6 4-6-3z" c="#a8c8ec" />
    <S d="M4 12l6 3 5-4M4 10l6 3 5-4M4 7l6 3 5-4" c="#10207c" />
    <F d="M5 3l4-3 7 2-4 5z" c={top} />
    <S d="M4 4l7 3 4-5" c="#102040" />
  </>
);

const litBulb = (c: string) => (
  <>
    <F d="M0 5h8v11H0z" c="#fff" />
    <circle cx="4" cy="8" r="3" fill={c} stroke="#5f6a30" />
    <F d="M2 11h4v4H2z" c={c} />
    <F d="M3 13h3v3H3z" c="#8b8b4a" />
  </>
);
const lock = <><F d="M0 9h8v7H0z" c="#f5a020" /><S d="M0 9h7v6H0zM2 9V6h3v3" c="#965a00" /><F d="M3 11h2v3H3z" c="#965a00" /></>;
const openLock = <><F d="M0 10h7v6H0z" c="#f5a020" /><S d="M0 10h6v5H0zM6 10V7h4v3" c="#965a00" /><F d="M3 12h2v2H3z" c="#965a00" /></>;

const layerTools: ReactNode[][] = [
  [
    <>{pixelLayers("#009a20")}{litBulb("#ffff50")}</>,
    <>{pixelLayers("#009a50")}{litBulb("#d8f0ff")}</>,
    <>{pixelLayers("#008a20")}{lock}</>,
    <>{pixelLayers("#008a20")}{openLock}</>,
    <>{pixelLayers("#ff00ff")}{litBulb("#ffff50")}</>,
    <>{pixelLayers("#ff00ff")}{litBulb("#d8f0ff")}</>,
    <>{pixelLayers("#ff00ff")}{lock}</>,
    <>{pixelLayers("#ff00ff")}{openLock}</>,
  ],
  [
    <>{pixelLayers("#c8dcf0")}<S d="M1 15L15 1" c={R} w={2} /></>,
    <>{pixelLayers("#ffffff")}<S d="M1 15l5-6M12 4l3-3" c={R} w={2} /></>,
    <>{pixelLayers("#ffffff")}<F d="M8 2h7v8H8z" c="#fff" /><S d="M11 2v8M7 6h8M10 3l1-1 1 1M10 9l1 1 1-1M8 5L7 6l1 1M14 5l1 1-1 1" c="#102040" /></>,
    <>{pixelLayers("#fff8b0")}<F d="M9 8h7v8H9z" c="#fff" /><S d="M12 9v6M9 12h6" c="#102040" /></>,
    <>{pixelLayers("#9cc8f0")}<S d="M8 13l7-3" c="#e08a10" w={2} />{lock}</>,
    <>{pixelLayers("#f5a030")}<S d="M8 10l7-3" c="#e08a10" w={2} />{lock}</>,
    <>{pixelLayers("#b0bcc8")}<F d="M13 0Q4 1 4 6H1l4 4 4-4H7q0-3 6-6z" c="#3c586a" /></>,
    <><F d="M0 0h16v16H0z" c="#fff" /><circle cx="8" cy="6" r="4" fill="#ffff50" stroke="#b09020" /><F d="M6 10h4v5H6z" c="#8b7430" /></>,
  ],
];

function Toolbar({ name, groups, place }: { name: string; groups: ReactNode[][]; place: string }) {
  return (
    <div role="toolbar" aria-label={name} className={`${place} absolute flex h-[25px] border-t border-[#8fbcf5] bg-[#95c0fa]`}>
      <div className="flex w-[10px] items-center justify-center">
        <Svg w={4} h={16} crisp><S d="M0 0v16M3 0v16" c="#fff" dash="1 1" /></Svg>
      </div>
      <div className="flex bg-gradient-to-b from-[#e4efff] to-[#bcd8ff] pr-[2px] pt-[3px]">
        {groups.map((g, gi) => (
          <div key={gi} className="flex items-start">
            {gi > 0 && <span className="ml-[3px] mr-1 h-[18px] w-px bg-[#6e7c90]" />}
            {g.map((icon, i) => (
              <button key={i} type="button" aria-label={`${name} ${gi + 1}-${i + 1}`} className="flex w-[23px] pl-1">
                <Svg>{icon}</Svg>
              </button>
            ))}
          </div>
        ))}
      </div>
      <button type="button" aria-label={`关闭${name}`} className="flex w-[10px] justify-center pt-1">
        <Svg w={5} h={5}><S d="M0 0l5 5M5 0L0 5" c="#fff" w={2} /></Svg>
      </button>
    </div>
  );
}

/* ---------- drawing area ---------- */

function ViewCube() {
  return (
    <svg width="92" height="96" viewBox="1331 192 92 96" className="absolute right-2 top-[25px]" role="img" aria-label="视图立方">
      <g fill="#696969">
        <path d="M1363 202h28l-3 12h-22z" />
        <path d="M1363 279h28l-3-12h-22z" />
        <path d="M1338 228v26l13-4v-18z" />
        <path d="M1416 228v26l-13-4v-18z" />
        <path d="M1360 203l-21 20 12 5 14-13z" />
        <path d="M1394 203l21 20-12 5-14-13z" />
        <path d="M1340 258l20 20 5-13-13-12z" />
        <path d="M1414 258l-20 20-5-13 13-12z" />
      </g>
      <path d="M1362 222h30l4 4v28l-4 4h-30l-4-4v-28z" fill="#c9ccc9" />
      <path d="M1358 222h6l-6 6zM1396 222h-6l6 6zM1358 259h6l-6-6zM1396 259h-6l6-6z" fill="#f4f4f4" />
      <path d="M1364 227h26v26h-26z" fill="#a3a6a3" />
      <g fontSize="15" fill="#fff" textAnchor="middle">
        <text x="1377" y="210">北</text>
        <text x="1377" y="285">南</text>
        <text x="1340" y="247">西</text>
        <text x="1414" y="247">东</text>
        <text x="1377" y="247" fontSize="18" fill="#6c6f6c" fontWeight="300">上</text>
      </g>
    </svg>
  );
}

function Canvas() {
  return (
    <main className="relative min-h-0 flex-1 border-b border-l-2 border-r-2 border-t border-b-white border-l-[#8a8a8a] border-r-white border-t-[#808080] bg-[#212830]">
      <svg width="1421" height="503" viewBox="9 167 1421 503" fill="none" className="absolute left-0 top-0 overflow-hidden" role="img" aria-label="图形">
        <g stroke="#fff" strokeWidth="1">
          <path d="M489 366L948 277L1133 577L489 366L436 570L946 664L1133 577L1241 620" />
          <path d="M1133 577.500H1250Q1251 600 1241 620M1133 577L1113 628" stroke="#a5a5a5" strokeDasharray="4 3" />
          <path d="M1193 620.500H1289M1241.500 573V660" />
          <path d="M1131 577h4M1133 575v5" stroke="#2fa52f" />
          <path d="M26.500 648.500h7v7h-7zM29.500 652V601M30 652.500H81" />
        </g>
        <circle cx="1250" cy="577" r="2" fill="#a5a5a5" />
        <g fill="#fff" fontFamily="DejaVu Sans" fontWeight="200" textAnchor="middle">
          <text x="35" y="594" fontSize="16">Y</text>
          <text x="93" y="653" fontSize="17">X</text>
        </g>
      </svg>
      <div className="absolute left-[1212px] top-[418px] h-[21px] w-[46px] bg-[#d5e4f2] pl-2 text-[12px] leading-[21px] text-black">22°</div>
      <ViewCube />
      <Toolbar name="给排水工具" groups={pipeIcons} place="left-[35px] -top-px" />
      <Toolbar name="图层工具" groups={layerTools} place="left-12 top-[29px]" />
    </main>
  );
}

/* ---------- command line ---------- */

const PROMPT = "指定下一点或 [圆弧(A)/闭合(C)/半宽(H)/长度(L)/放弃(U)/宽度(W)/角度(N)]:";

function Prompt() {
  return (
    <span className="whitespace-pre">
      {PROMPT.split(/([\x20-\x7e]+)/).map((part, i) => (
        <span key={i} className={i % 2 ? "text-[12px]" : "text-[14px]"}>
          {part}
        </span>
      ))}
    </span>
  );
}

function CommandLine() {
  return (
    <section aria-label="命令行" className="flex h-14 shrink-0 border-t border-white bg-[#bfdbff] pb-[3px] pr-px pt-[5px] font-['Liberation_Mono','Noto_Sans_CJK_SC',monospace] text-black">
      <div className="flex w-6 shrink-0 flex-col items-center justify-between bg-[#bcd2ef] pb-[2px] pt-[2px]">
        <Svg w={14} h={4} crisp><S d="M0 0h14M0 3h14" dash="1 1" c="#777" /></Svg>
        <Svg w={12} h={12}><S d="M0 0l11 11M11 0L0 11" c="#70757c" w={1} /></Svg>
        <Svg w={12} h={11}><S d="M0 10l1-4 6-6 3 3-6 6zM5 10h7M8 7h4" c="#70757c" /></Svg>
      </div>
      <div className="flex flex-1 flex-col border-l-2 border-t-2 border-[#777] bg-white">
        <div className="flex h-[23px]">
          <div className="flex flex-1 flex-col justify-end overflow-hidden pb-[2px] pl-[2px]">
            <p className="h-4 shrink-0 leading-4"><Prompt /></p>
            <p className="h-4 shrink-0 leading-4"><Prompt /></p>
          </div>
          <div className="flex w-4 flex-col items-center justify-around bg-[#f0f0f0]">
            <Svg w={8} h={6}><S d="M1 5l3-3 3 3" c="#505050" w={2} /></Svg>
            <Svg w={8} h={6}><S d="M1 1l3 3 3-3" c="#505050" w={2} /></Svg>
          </div>
        </div>
        <div className="flex h-5 items-center border-t border-[#888] pl-[2px]">
          <label htmlFor="cmd" className="leading-[18px]"><Prompt /></label>
          <input id="cmd" className="min-w-0 flex-1 bg-transparent pl-1 text-[12px] outline-none" />
          <div className="mr-4 flex h-4 w-[230px] items-center justify-end bg-[#f0f0f0] pr-[5px]">
            <Svg w={6} h={8}><S d="M1 1l3 3-3 3" c="#505050" w={2} /></Svg>
          </div>
        </div>
      </div>
    </section>
  );
}

/* ---------- status bar ---------- */

const annot = <F d="M8 1l2 4v3l5 5-1 2-5-3H7l-5 3-1-2 5-5V5z" />;

const statusIcons: { name: string; on?: boolean; icon: ReactNode }[] = [
  { name: "捕捉", icon: <><S d="M3 0v15M8 0v15M13 0v9M0 4h16M0 9h16M0 13h10" w={1} /><F d="M11 10h5v6h-5z" c={B} /><F d="M12 12h3v3h-3z" c="#cfe0fa" /></> },
  { name: "栅格", icon: <S d="M3 1v14M7 1v14M11 1v14M0 4h15M0 8h15M0 12h15" /> },
  { name: "动态输入", on: true, icon: <><S d="M4 0v10M0 4h9" w={1} /><F d="M7 7h9v9H7z" /><S d="M8 9h6M8 11h6M8 13h6" c="#ffe9a0" /></> },
  { name: "正交", icon: <><S d="M3 2v11h11" w={2} /><S d="M4 9h3v4" /></> },
  { name: "极轴", on: true, icon: <><circle cx="7" cy="8" r="6" stroke={G} strokeWidth="1.500" /><S d="M7 8l7-6M7 8h9" w={2} /></> },
  { name: "对象捕捉", on: true, icon: <><S d="M2 4h11v11H2z" w={2} /><F d="M11 0h5v5h-5z" c={B} /><F d="M12 1h3v3h-3z" c="#fff" /></> },
  { name: "对象追踪", on: true, icon: <><S d="M14 1L2 14h14M4 6l7 7" w={2} /></> },
  { name: "动态UCS", icon: <><F d="M5 0h4v9H0V5h5z" /><S d="M9 15v-5h6" /></> },
  { name: "透明度", on: true, icon: <><rect x="1" y="1" width="14" height="14" fill={G} /><F d="M6 3h3v3H6zM3 6h3v3H3zM9 6h3v3H9zM6 9h3v3H6zM12 3h2v3h-2zM12 9h2v3h-2z" c="#ffe9a0" /></> },
  { name: "循环选择", on: true, icon: <><S d="M3 3a7 7 0 1 1-2 6M7 4v7M4 7h7" w={1} /><F d="M1 1h5v5z" /></> },
  { name: "线宽", icon: <><F d="M0 2h16v2H0zM0 12h16v2H0z" /><S d="M0 8h16" c={B} w={2} dash="3 1" /></> },
  { name: "选择", icon: <><S d="M0 1h15" c={B} dash="3 1" /><F d="M5 4l7 7-3 0 2 4-2 1-2-4-2 2z" /></> },
  { name: "图层", icon: <><F d="M8 0l7 4-7 3-7-3z" /><S d="M1 7l7 3 5-2M1 11l7 3 2-1" w={2} /><F d="M14 8l-4 4h2v4l4-5h-2z" c={B} /></> },
  { name: "快捷特性", on: true, icon: <><F d="M0 7h4v5h9v4H0z" c={B} /><F d="M5 1h11v9H5z" /><F d="M7 3h7v5H7z" c="#ffe9a0" /><F d="M9 4h4v3H9z" /></> },
];

function StatusButton({ name, on, children }: { name: string; on?: boolean; children: ReactNode }) {
  return (
    <button
      type="button"
      aria-label={name}
      className={
        on
          ? "mx-px flex h-5 w-5 items-center justify-center rounded-[2px] border border-[#c9ac6a] bg-gradient-to-b from-[#fff6d8] to-[#ffdf7d]"
          : "mx-px flex h-5 w-5 items-center justify-center"
      }
    >
      <Svg>{children}</Svg>
    </button>
  );
}

function StatusBar() {
  return (
    <footer className="flex h-6 shrink-0 items-center border-t border-[#5b80b6] bg-gradient-to-b from-[#d3e4fb] via-[#bfd6f6] to-[#dcebfe] text-[11px] text-[#1e4489]">
      <div className="flex h-6 w-[320px] shrink-0 items-center border border-[#6d6d6d] bg-[#d5e4f2] text-[12px] text-[#222]">
        <button type="button" aria-label="布局菜单" className="flex w-9 justify-start pl-[7px]">
          <Svg w={17} h={12} crisp><F d="M0 1h17v2H0zM0 5h17v2H0zM0 9h17v2H0z" c="#111" /></Svg>
        </button>
        <button type="button" className="h-5 w-11 bg-[#b9d0ee] font-bold leading-5">模型</button>
        <button type="button" className="h-5 pl-[9px] pr-[6px] leading-5">布局1</button>
        <span className="h-3 w-px bg-[#999]" />
        <button type="button" aria-label="新建布局" className="ml-[13px]">
          <Svg w={14} h={14} crisp><S d="M7 0v14M0 7h14" c="#000" w={2} /></Svg>
        </button>
      </div>
      <button type="button" className="ml-[35px] flex items-center gap-[3px] whitespace-nowrap"><span><span className="text-[13px]">比例</span> 1:100</span><Caret /></button>
      <span className="ml-[5px] whitespace-nowrap"><span className="text-[13px]">单位</span>:mm</span>
      <span className="ml-[10px] whitespace-nowrap">62458, 8117, 0</span>
      <div className="ml-auto mr-[54px] flex items-center">
        {statusIcons.map((s) => (
          <StatusButton key={s.name} name={s.name} on={s.on}>{s.icon}</StatusButton>
        ))}
        <StatusButton name="注释比例">{annot}</StatusButton>
        <button type="button" className="flex w-6 items-center gap-[3px]">1:1<Caret /></button>
        <StatusButton name="注释可见性">{annot}<circle cx="13" cy="3" r="2" fill={O} /><S d="M12 0v5M10 2h5" c={O} /></StatusButton>
        <StatusButton name="自动比例">{annot}<F d="M13 0l-3 4h2v3l4-4h-3z" /></StatusButton>
        <StatusButton name="计算表"><F d="M1 0h14v16H1z" /><F d="M3 2h2v2H3zM6 2h7v2H6zM3 6h2v2H3zM6 6h7v2H6zM3 10h2v1H3zM6 10h7v1H6zM3 13h2v1H3zM6 13h7v1H6z" c="#cfe0fa" /></StatusButton>
      </div>
      <div className="flex items-center">
        <StatusButton name="单线"><F d="M2 4h12v2H2zM2 11h12v2H2z" c="#999" /></StatusButton>
        <StatusButton name="管线" on><S d="M1 3h13v12M4 6h7v9M2 1h14" c="#2a7fe8" w={2} /><S d="M1 8h3l2 3 2-3 2 3" c={R} w={1} /></StatusButton>
        <StatusButton name="交叉" on><S d="M6 0v6H0M10 0v6h6M6 16v-6H0M10 16v-6h6" c="#2a7fe8" w={2} /><S d="M5 8h5M7 6v4" c={R} /></StatusButton>
        <StatusButton name="多线"><S d="M2 4h12M2 12h12" c="#999" /><S d="M2 8h12" c="#b8b060" /></StatusButton>
      </div>
      <div className="relative flex h-full w-[212px] shrink-0 items-center border-l border-white bg-gradient-to-b from-[#9fc0ee] to-[#84ace2] pl-[5px]">
        <StatusButton name="设置"><circle cx="8" cy="8" r="4" stroke="#43484f" strokeWidth="3" /><path d="M8 1v3M8 12v3M1 8h3M12 8h3M3 3l2 2M11 11l2 2M13 3l-2 2M5 11l-2 2" stroke="#43484f" strokeWidth="3" /></StatusButton>
        <StatusButton name="锁定"><F d="M2 7h8v7H2z" c={B} /><S d="M9 7V4q2-3 4 0v3" c={B} w={2} /></StatusButton>
        <StatusButton name="隔离对象"><circle cx="8" cy="6" r="4" fill={O} /><F d="M6 9h4v3H6zM6 13h4v2H6z" c={O} /></StatusButton>
        <StatusButton name="性能"><S d="M3 13a6 6 0 1 1 10 0M8 10L5 6" w={2} /></StatusButton>
        <StatusButton name="全屏"><S d="M2 2h11v11H2z" w={1} /><S d="M9 5h2v2M4 9v2h2" /></StatusButton>
        <StatusButton name="反馈"><S d="M11 6V1H2v12h9M4 4h5M4 7h5M4 10h3" c={B} /><S d="M8 12l6-6" c="#2a7fe8" w={3} /></StatusButton>
        <a href="#gstarcad" className="ml-1 text-[#2e5694]">GstarCAD</a>
        <span className="absolute bottom-0 right-0">
          <Svg w={12} h={12} crisp><F d="M9 1h2v2H9zM9 5h2v2H9zM9 9h2v2H9zM5 5h2v2H5zM5 9h2v2H5zM1 9h2v2H1z" c="#4a70a8" /></Svg>
        </span>
      </div>
    </footer>
  );
}

function Balloon() {
  const count = useRef<HTMLInputElement>(null);

  useEffect(() => {
    count.current?.focus();
    count.current?.select();
  }, []);

  return (
    <div role="dialog" aria-label="问卷调研" className="absolute bottom-[30px] right-[52px] h-[100px] w-[270px] rounded-[10px] border border-black bg-[#ffffe1] text-[12px] text-black">
      <div className="flex h-6 items-center pl-4 pt-6">
        <Svg w={17} h={17}>
          <circle cx="9" cy="9" r="8" fill="#1c22e0" />
          <circle cx="9" cy="5" r="1" fill="#fff" />
          <S d="M7 8h2v5M7 13h5" c="#fff" w={2} />
        </Svg>
        <span className="ml-[42px] font-bold leading-4">您参与问卷调研</span>
        <button type="button" aria-label="关闭" className="ml-auto mr-[6px] flex h-[18px] w-[18px] items-center justify-center border border-[#888] bg-[#f2f2f2]">
          <Svg w={10} h={10}><S d="M0 0l10 10M10 0L0 10" c="#000" w={2} /></Svg>
        </button>
      </div>
      <input
        ref={count}
        aria-label="长度"
        defaultValue="4434"
        className="absolute left-8 top-[10px] h-[21px] w-11 border border-black bg-white px-[2px] text-[12px] leading-4 text-black outline-none selection:bg-[#0078d7] selection:text-white"
      />
      <p className="whitespace-nowrap pl-4 pt-[18px] leading-4">浩辰CAD 2025版用户新功能使用满意度调研</p>
      <a href="#survey" className="ml-4 mt-[9px] inline-block leading-4 text-[#0000e0] underline">去看看</a>
      <svg width="18" height="18" viewBox="0 0 18 18" className="absolute -bottom-[18px] right-[32px]" aria-hidden="true">
        <path d="M0 0L17 17V0" fill="#ffffe1" stroke="#000" />
        <path d="M1 0H16" stroke="#ffffe1" strokeWidth="3" />
      </svg>
    </div>
  );
}

/* ---------- windows behind ---------- */

const behindPanels = [
  { title: "绘图", width: "w-[221px]" },
  { title: "修改", width: "w-[152px]" },
  { title: "注释", width: "w-[130px]" },
  { title: "图层", width: "w-[275px]" },
  { title: "块", width: "w-[119px]" },
  { title: "特性", width: "w-[247px]" },
  { title: "组", width: "w-[75px]" },
];

function BehindLeft() {
  return (
    <div className="flex w-[7px] shrink-0 flex-col bg-[#1c1e28]">
      <div className="flex h-[35px] items-center overflow-hidden bg-[#c9cdd2] text-[#333]">
        <Svg w={7} h={8}><S d="M0 1l5 6M5 1L0 7" c="#333" /></Svg>
      </div>
      <div className="h-[5px] bg-[#dfe3e8]" />
      <div className="h-9 border-y-2 border-[#0b4db8] bg-white" />
      <div className="h-10 bg-[#f6f6f6]" />
      <div className="mt-[248px] h-14 bg-[#067f78]" />
    </div>
  );
}

function BehindRight() {
  return (
    <div className="flex w-[7px] shrink-0 flex-col overflow-hidden bg-[#a9c4e8]">
      <div className="h-[35px] shrink-0 bg-gradient-to-r from-[#a9aeb5] to-[#ccd1d7]" />
      <div className="h-[5px] shrink-0 bg-[#dfe3e8]" />
      <div className="h-9 shrink-0 border-y-2 border-[#0b4db8] bg-[#f0f0f0]" />
      <div className="h-10 shrink-0 overflow-hidden bg-[#f0f0f0] pt-3 text-[12px] leading-4">筛</div>
      <div className="h-[49px] shrink-0 bg-[#1c1e28]" />
      <div className="h-[42px] shrink-0 border-b border-[#ccc] bg-[#e4e4e4]" />
      <div className="h-[54px] shrink-0 border-b border-[#bbb] bg-[#ececec]" />
      <div className="h-[355px] shrink-0 border-b-4 border-[#a8abb0] bg-[#dcdcdc]" />
      <div className="h-[28px] shrink-0 bg-[#dde1e8]" />
      <div className="h-[26px] shrink-0 bg-[#a8c5f0]" />
      <div className="flex flex-1 flex-col gap-1 bg-gradient-to-b from-[#c3d0e2] to-[#a9c8ea] pt-1">
        <Svg w={7} h={16}><F d="M0 5h5v9H0z" /><S d="M0 2h4M1 8l5 6" c={O} w={2} /></Svg>
        <Svg w={7} h={16}><S d="M0 12l7-8" c={O} w={3} /></Svg>
        <Svg w={7} h={16}><F d="M0 2l6 7-3 4-3-4z" c={B} /></Svg>
      </div>
    </div>
  );
}

export default function App() {
  return (
    <div className="flex h-screen flex-col overflow-hidden bg-[#b8d8e4] font-['Noto_Sans','Noto_Sans_CJK_SC',sans-serif]">
      <div className="flex min-h-0 flex-1">
        <BehindLeft />
        <div className="relative flex min-w-0 flex-1 flex-col bg-[#bfdbff]">
          <TitleBar />
          <TabRow />
          <Ribbon />
          <div className="flex h-[19px] shrink-0 items-end bg-[#f0f0f0]">
            <button type="button" className="relative h-[19px] w-[103px] text-left font-['Liberation_Serif',serif] text-[12px] text-black">
              <svg width="103" height="19" className="absolute left-px top-0 overflow-visible" aria-hidden="true">
                <defs>
                  <linearGradient id="doc" x1="0" y1="0" x2="0" y2="1">
                    <stop offset="0" stopColor="#fff0cc" />
                    <stop offset="1" stopColor="#ffc766" />
                  </linearGradient>
                </defs>
                <path d="M1 19L14 4Q17 1 21 1H98Q102 1 102 4V19z" fill="url(#doc)" stroke="#8a8a8a" />
              </svg>
              <span className="relative pl-[25px] leading-[18px]">Drawing1</span>
              <span className="absolute right-2 top-[6px]">
                <Svg w={8} h={8}><S d="M1 1l6 6M7 1L1 7" c="#c9c4ba" w={2} /></Svg>
              </span>
            </button>
          </div>
          <Canvas />
          <CommandLine />
          <StatusBar />
          <Balloon />
        </div>
        <BehindRight />
      </div>
      <div className="flex h-2 shrink-0 bg-[#e2e2e2]">
        <div className="w-[77px] shrink-0 bg-[#1c1e28]" />
        <div className="w-[126px] shrink-0" />
        <div className="flex min-w-0 flex-1 gap-[3px] overflow-hidden border-b-2 border-l-2 border-b-[#b4e0e6] border-l-[#333] bg-[#b3c8dc] pl-1">
          {behindPanels.map((p) => (
            <div key={p.title} className={`${p.width} flex shrink-0 items-end justify-center overflow-hidden rounded-b-[3px] border-b border-[#7f9db8] bg-[#a9bfd8] text-[13px] leading-[15px] text-[#3f69a8]`}>
              {p.title}
            </div>
          ))}
        </div>
      </div>
    </div>
  );
}
